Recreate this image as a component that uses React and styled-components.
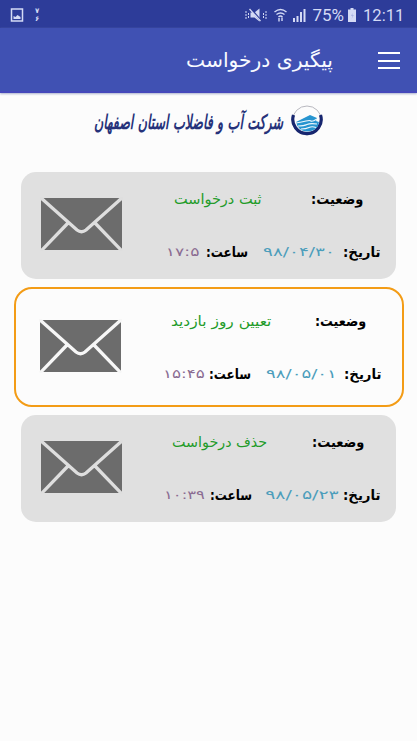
import React, { useLayoutEffect, useRef } from "react";
import styled, { createGlobalStyle } from "styled-components";

const Global = createGlobalStyle`
  * { box-sizing: border-box; }
  body { margin: 0; background: #fcfcfc; font-family: "DejaVu Sans", sans-serif; }
`;

const Screen = styled.div`
  width: 417px;
  height: 741px;
  overflow: hidden;
  background: #fcfcfc;
`;

const StatusBar = styled.header`
  height: 28px;
  padding: 1px 13px 0 10px;
  display: flex;
  align-items: center;
  justify-content: space-between;
  background: #2d3c99;
  color: #d4daf5;
`;

const StatusGroup = styled.div`
  display: flex;
  align-items: center;
`;

const StatusIcon = styled.svg`
  display: block;
  margin-right: ${(p) => p.$gap || 0}px;
`;

const Stacked = styled.div`
  display: flex;
  flex-direction: column;
  font-size: 7px;
  font-weight: 700;
  line-height: 8px;
`;

const AppBar = styled.nav`
  direction: rtl;
  height: 65px;
  padding: 0 17px;
  display: flex;
  align-items: center;
  gap: 45px;
  background: #4051b3;
  border-bottom: 2px solid #4548bb;
  box-shadow: 0 1px 2px #aab0cc;
  color: #f8faff;
`;

const MenuButton = styled.button`
  width: 22px;
  height: 17px;
  padding: 0;
  border: 0;
  margin-top: 2px;
  background: none;
  display: flex;
  flex-direction: column;
  justify-content: space-between;
`;

const MenuLine = styled.span`
  height: 2px;
  width: 22px;
  background: #fff;
`;

const Brand = styled.div`
  direction: rtl;
  height: 79px;
  padding: 11px 93px 0 0;
  display: flex;
  gap: 7px;
`;

const BrandText = styled.div`
  padding-top: 4px;
`;

const Slot = styled.span`
  display: block;
  flex: none;
  width: ${(p) => p.$width}px;
  height: ${(p) => p.$line || 20}px;
  line-height: ${(p) => p.$line || 20}px;
  margin-right: ${(p) => p.$gap || 0}px;
  font-size: ${(p) => p.$size || 14}px;
  font-weight: ${(p) => (p.$bold ? 700 : 400)};
  font-style: ${(p) => (p.$italic ? "italic" : "normal")};
  font-family: ${(p) => p.$font || '"DejaVu Sans"'}, sans-serif;
  color: ${(p) => p.$color || "inherit"};
  direction: rtl;
`;

const Ink = styled.span`
  display: inline-block;
  white-space: nowrap;
  transform-origin: right center;
`;

/* Condenses or widens a line of text so that it fills its slot. */
function FitText({ children, ...slot }) {
  const ink = useRef(null);
  useLayoutEffect(() => {
    const el = ink.current;
    el.style.transform = `scaleX(${slot.$width / el.offsetWidth})`;
  }, [slot.$width, children]);
  return (
    <Slot {...slot}>
      <Ink ref={ink}>{children}</Ink>
    </Slot>
  );
}

const List = styled.main`
  display: flex;
  flex-direction: column;
  align-items: center;
  gap: 8px;
`;

const Card = styled.article`
  direction: rtl;
  display: flex;
  justify-content: space-between;
  width: ${(p) => (p.$active ? 390 : 375)}px;
  height: ${(p) => (p.$active ? 120 : 107)}px;
  padding: ${(p) => (p.$active ? "22px 20px 0 23px" : "17px 15px 0 19px")};
  border-radius: ${(p) => (p.$active ? 18 : 15)}px;
  border: ${(p) => (p.$active ? "2px solid #f39c16" : "0")};
  background: ${(p) => (p.$active ? "#fcfcfc" : "#e0e0e0")};
`;

const Details = styled.div`
  display: flex;
  flex-direction: column;
  gap: 33px;
`;

const Row = styled.div`
  display: flex;
  padding-right: ${(p) => p.$inset || 0}px;
`;

const Envelope = styled.svg`
  display: block;
  margin-top: 8px;
`;

function Mail({ gap }) {
  return (
    <Envelope width="83" height="54" viewBox="0 0 83 54">
      <rect x="1" y="1" width="81" height="52" rx="1" fill="#6c6c6c" />
      <g fill="none" stroke={gap} strokeWidth="3.3">
        <path d="M0 0 37 33Q41.500 36.500 46 33L83 0M1 54 28 26M82 54 55 26" />
      </g>
    </Envelope>
  );
}

const requests = [
  { status: "ثبت درخواست", date: "۹۸/۰۴/۳۰", time: "۱۷:۵", inset: 18, label: 52, statusGap: 49, statusWidth: 88, dateGap: 8, dateWidth: 72, hourGap: 15, timeGap: 7, timeWidth: 33 },
  { status: "تعیین روز بازدید", date: "۹۸/۰۵/۰۱", time: "۱۵:۴۵", inset: 15, label: 51, statusGap: 44, statusWidth: 100, dateGap: 7, dateWidth: 71, hourGap: 14, timeGap: 5, timeWidth: 42, active: true },
  { status: "حذف درخواست", date: "۹۸/۰۵/۲۳", time: "۱۰:۳۹", inset: 17, label: 52, statusGap: 45, statusWidth: 95, dateGap: 4, dateWidth: 74, hourGap: 13, timeGap: 5, timeWidth: 41 },
];

function RequestCard({ item }) {
  return (
    <Card $active={item.active}>
      <Details>
        <Row $inset={item.inset}>
          <FitText $width={item.label} $bold>وضعیت:</FitText>
          <FitText $width={item.statusWidth} $gap={item.statusGap} $color="#229b29">{item.status}</FitText>
        </Row>
        <Row>
          <FitText $width={38} $bold>تاریخ:</FitText>
          <FitText $width={item.dateWidth} $gap={item.dateGap} $size={12} $color="#4b9dbb">{item.date}</FitText>
          <FitText $width={42} $gap={item.hourGap} $bold>ساعت:</FitText>
          <FitText $width={item.timeWidth} $gap={item.timeGap} $size={12} $color="#8b6c92">{item.time}</FitText>
        </Row>
      </Details>
      <Mail gap={item.active ? "#f7f7f7" : "#dedede"} />
    </Card>
  );
}

export default function App() {
  return (
    <Screen>
      <Global />
      <StatusBar>
        <StatusGroup>
          <StatusIcon width="14" height="14" viewBox="0 0 14 14" $gap={11} fill="none" stroke="currentColor">
            <path d="M1.500 1h11v12h-11z" strokeWidth="1.500" />
            <path d="M3.500 11V8l2 1 2-2 3 2v2z" fill="currentColor" stroke="none" />
          </StatusIcon>
          <Stacked><span>۷</span><span>۶</span></Stacked>
        </StatusGroup>
        <StatusGroup>
          <StatusIcon width="22" height="14" viewBox="0 0 22 14" $gap={7} fill="none" stroke="currentColor">
            <path d="M5.500 4.500h4l5-4v13l-5-4h-4z" fill="currentColor" stroke="none" />
            <path d="M1 3v8M3.500 5v5M18.500 5v5M21 3v8" strokeDasharray="2 1" />
            <path d="M6 1l10 12" stroke="#2d3c99" strokeWidth="2" />
            <path d="M4.500 1l11 12" strokeWidth="1.300" />
          </StatusIcon>
          <StatusIcon width="13" height="14" viewBox="0 0 13 14" $gap={5} fill="none" stroke="currentColor" strokeWidth="1.400">
            <path d="M.5 4Q6.500-1 12.500 4M2.500 6.500q4-3 8 0M4.500 9q2-2 4 0" />
            <path d="M5 13.500V10M8 9.500v3.500" />
          </StatusIcon>
          <StatusIcon width="14" height="14" viewBox="0 0 14 14" $gap={6} fill="currentColor">
            <path d="M1 10h2v4H1zM4.500 8h2v6h-2zM8 4h2v10H8zM11.500 1h2v13h-2z" />
          </StatusIcon>
          <FitText $width={32} $size={17} $font="Roboto">75%</FitText>
          <StatusIcon width="17" height="14" viewBox="0 0 17 14" $gap={2} fill="currentColor">
            <path d="M6.500 0h3v1.500h2.500V14H4V1.500h2.500z" />
            <path d="M8.500 5 7 8h1.500L7.500 11l2.300-4H8.500z" fill="#aab3e2" />
          </StatusIcon>
          <FitText $width={41} $size={17} $font="Roboto">12:11</FitText>
        </StatusGroup>
      </StatusBar>
      <AppBar>
        <MenuButton aria-label="منو">
          <MenuLine /><MenuLine /><MenuLine />
        </MenuButton>
        <FitText $width={147} $size={20} $line={30}>پیگیری درخواست</FitText>
      </AppBar>
      <Brand>
        <svg width="34" height="34" viewBox="0 0 34 34">
          <circle cx="17" cy="16.500" r="14.500" fill="none" stroke="#a6a6ae" strokeWidth="0.800" />
          <path d="M3.500 11A14.200 14.200 0 1 0 30.500 11" fill="none" stroke="#17266f" strokeWidth="3.200" />
          <path d="M6 18 20 11l7 3-1 3 3 1q-1 9-12 9.500Q8 27 6 18z" fill="#2795d0" />
          <path d="M6 19q6-1 10-2t5 0 6-2M8 22q6 0 9-1.500t10-.5M11 25q5 0 8-1.500t7 0" fill="none" stroke="#f0f8fc" strokeWidth="1.200" />
        </svg>
        <BrandText>
          <FitText $width={189} $size={20} $line={28} $bold $italic $color="#26327a">شرکت آب و فاضلاب استان اصفهان</FitText>
        </BrandText>
      </Brand>
      <List>
        {requests.map((item) => <RequestCard key={item.date} item={item} />)}
      </List>
    </Screen>
  );
}
